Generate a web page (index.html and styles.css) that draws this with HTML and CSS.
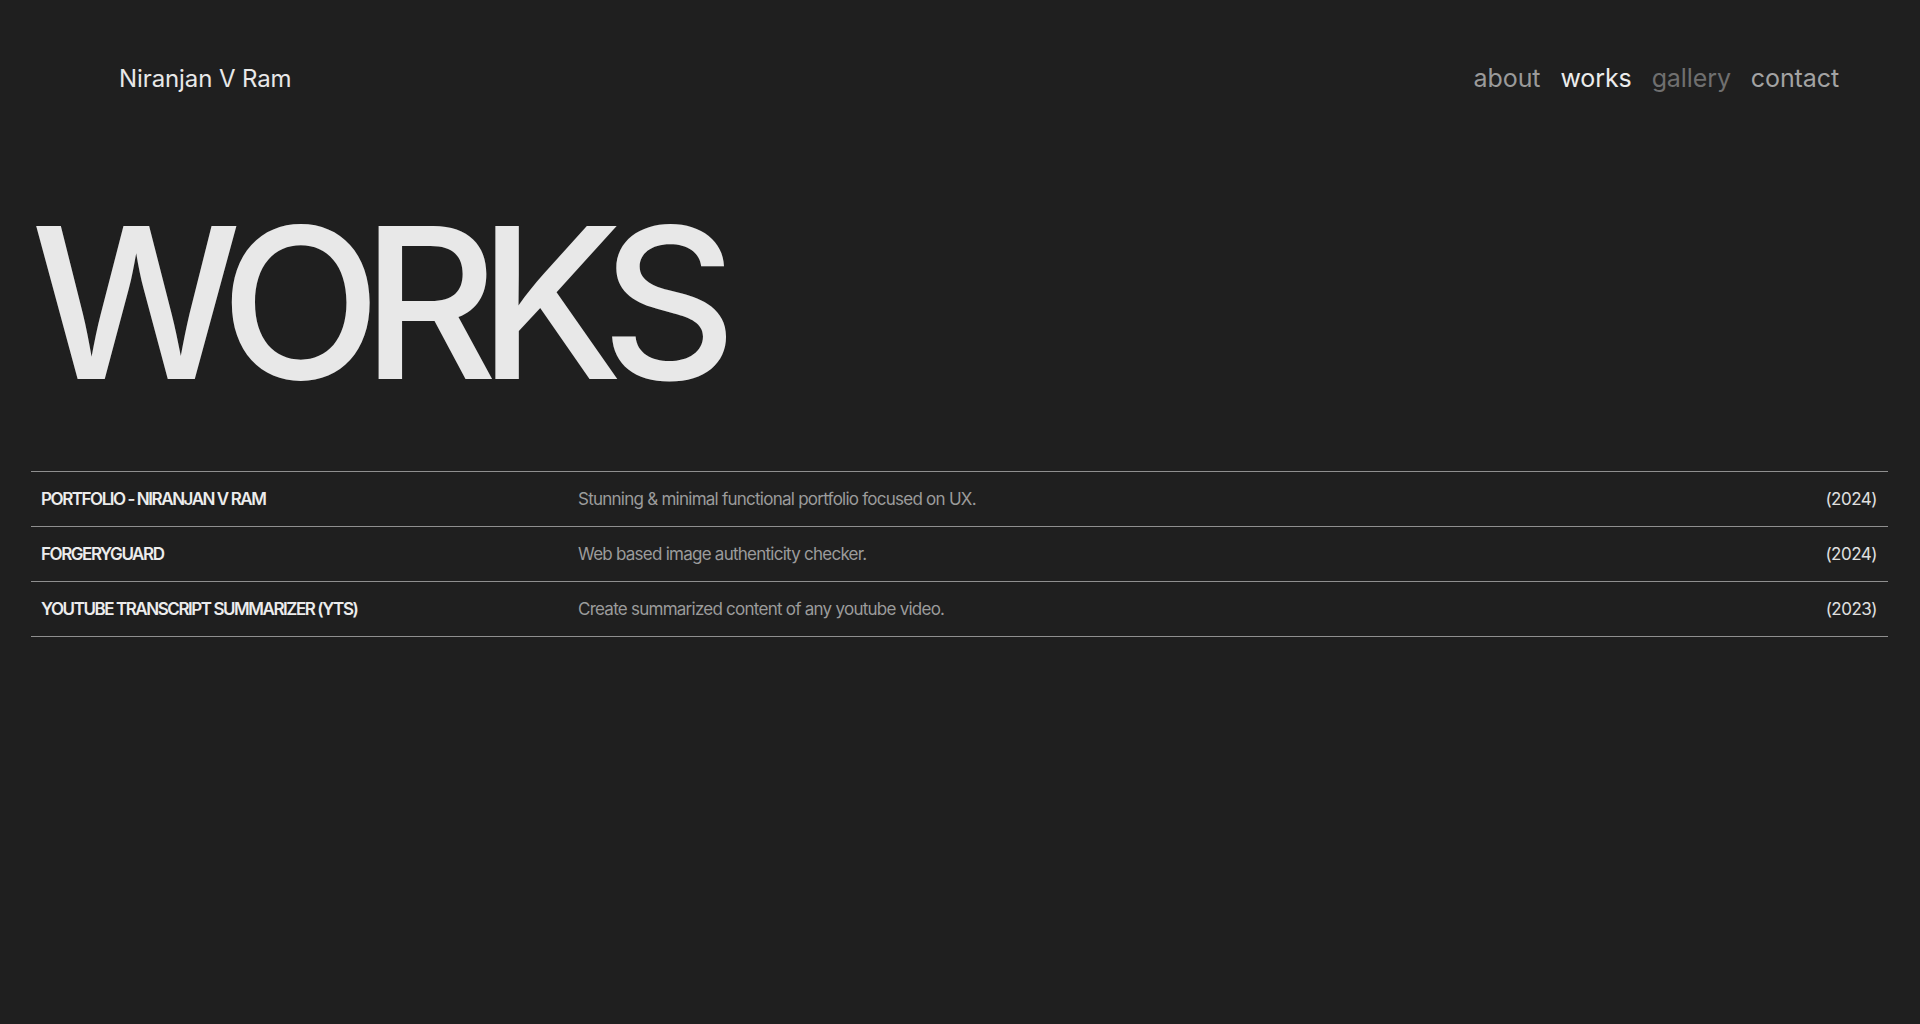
FILE: index.html
```html
<!DOCTYPE html>
<html lang="en">
<head>
<meta charset="utf-8">
<title>Works — Niranjan V Ram</title>
<link rel="stylesheet" href="styles.css">
</head>
<body>
<header class="site-header">
  <a class="brand" href="#">Niranjan V Ram</a>
  <nav class="nav">
    <a class="nav-link nav-about" href="#">about</a>
    <a class="nav-link nav-works" href="#">works</a>
    <a class="nav-link nav-gallery" href="#">gallery</a>
    <a class="nav-link nav-contact" href="#">contact</a>
  </nav>
</header>
<main class="main">
  <h1 class="title">WORKS</h1>
  <ul class="works">
    <li class="work">
      <span class="work-name">PORTFOLIO - NIRANJAN V RAM</span>
      <span class="work-desc">Stunning &amp; minimal functional portfolio focused on UX.</span>
      <span class="work-year">(2024)</span>
    </li>
    <li class="work">
      <span class="work-name">FORGERYGUARD</span>
      <span class="work-desc">Web based image authenticity checker.</span>
      <span class="work-year">(2024)</span>
    </li>
    <li class="work">
      <span class="work-name">YOUTUBE TRANSCRIPT SUMMARIZER (YTS)</span>
      <span class="work-desc">Create summarized content of any youtube video.</span>
      <span class="work-year">(2023)</span>
    </li>
  </ul>
</main>
</body>
</html>
```
FILE: styles.css
```css
* { box-sizing: border-box; }
html, body { margin: 0; padding: 0; }
body {
  background: #1f1f1f;
  color: #e8e8e8;
  font-family: Inter, "Noto Sans", sans-serif;
  min-height: 1024px;
}
a { text-decoration: none; color: inherit; }

.site-header {
  height: 156px;
  display: flex;
  align-items: center;
  justify-content: space-between;
  padding: 0 81px 0 119px;
}
.brand {
  font-size: 24px;
  color: #e8e8e8;
  letter-spacing: -0.1px;
}
.nav { display: flex; gap: 20px; }
.nav-link { font-size: 25px; letter-spacing: -0.1px; }
.nav-about { color: #9a9a9a; }
.nav-works { color: #ececec; }
.nav-gallery { color: #6f6f6f; }
.nav-contact { color: #a3a3a3; }

.main { padding: 0 32px 0 31px; }
.title {
  margin: 42px 0 63px 0;
  font-size: 210px;
  line-height: 1;
  font-weight: 500;
  letter-spacing: -19.5px;
  color: #e8e8e8;
}
.works {
  list-style: none;
  margin: 0;
  padding: 0;
  border-top: 1px solid #8f8f8f;
}
.work {
  display: grid;
  grid-template-columns: 537px 1fr auto;
  align-items: center;
  height: 55px;
  padding: 0 11px 0 10px;
  border-bottom: 1px solid #8f8f8f;
  font-size: 17px;
}
.work-name { font-weight: 600; letter-spacing: -1.45px; color: #ececec; }
.work-desc { color: #9b9b9b; letter-spacing: -0.75px; }
.work-year { color: #e0e0e0; letter-spacing: -0.5px; }
```
